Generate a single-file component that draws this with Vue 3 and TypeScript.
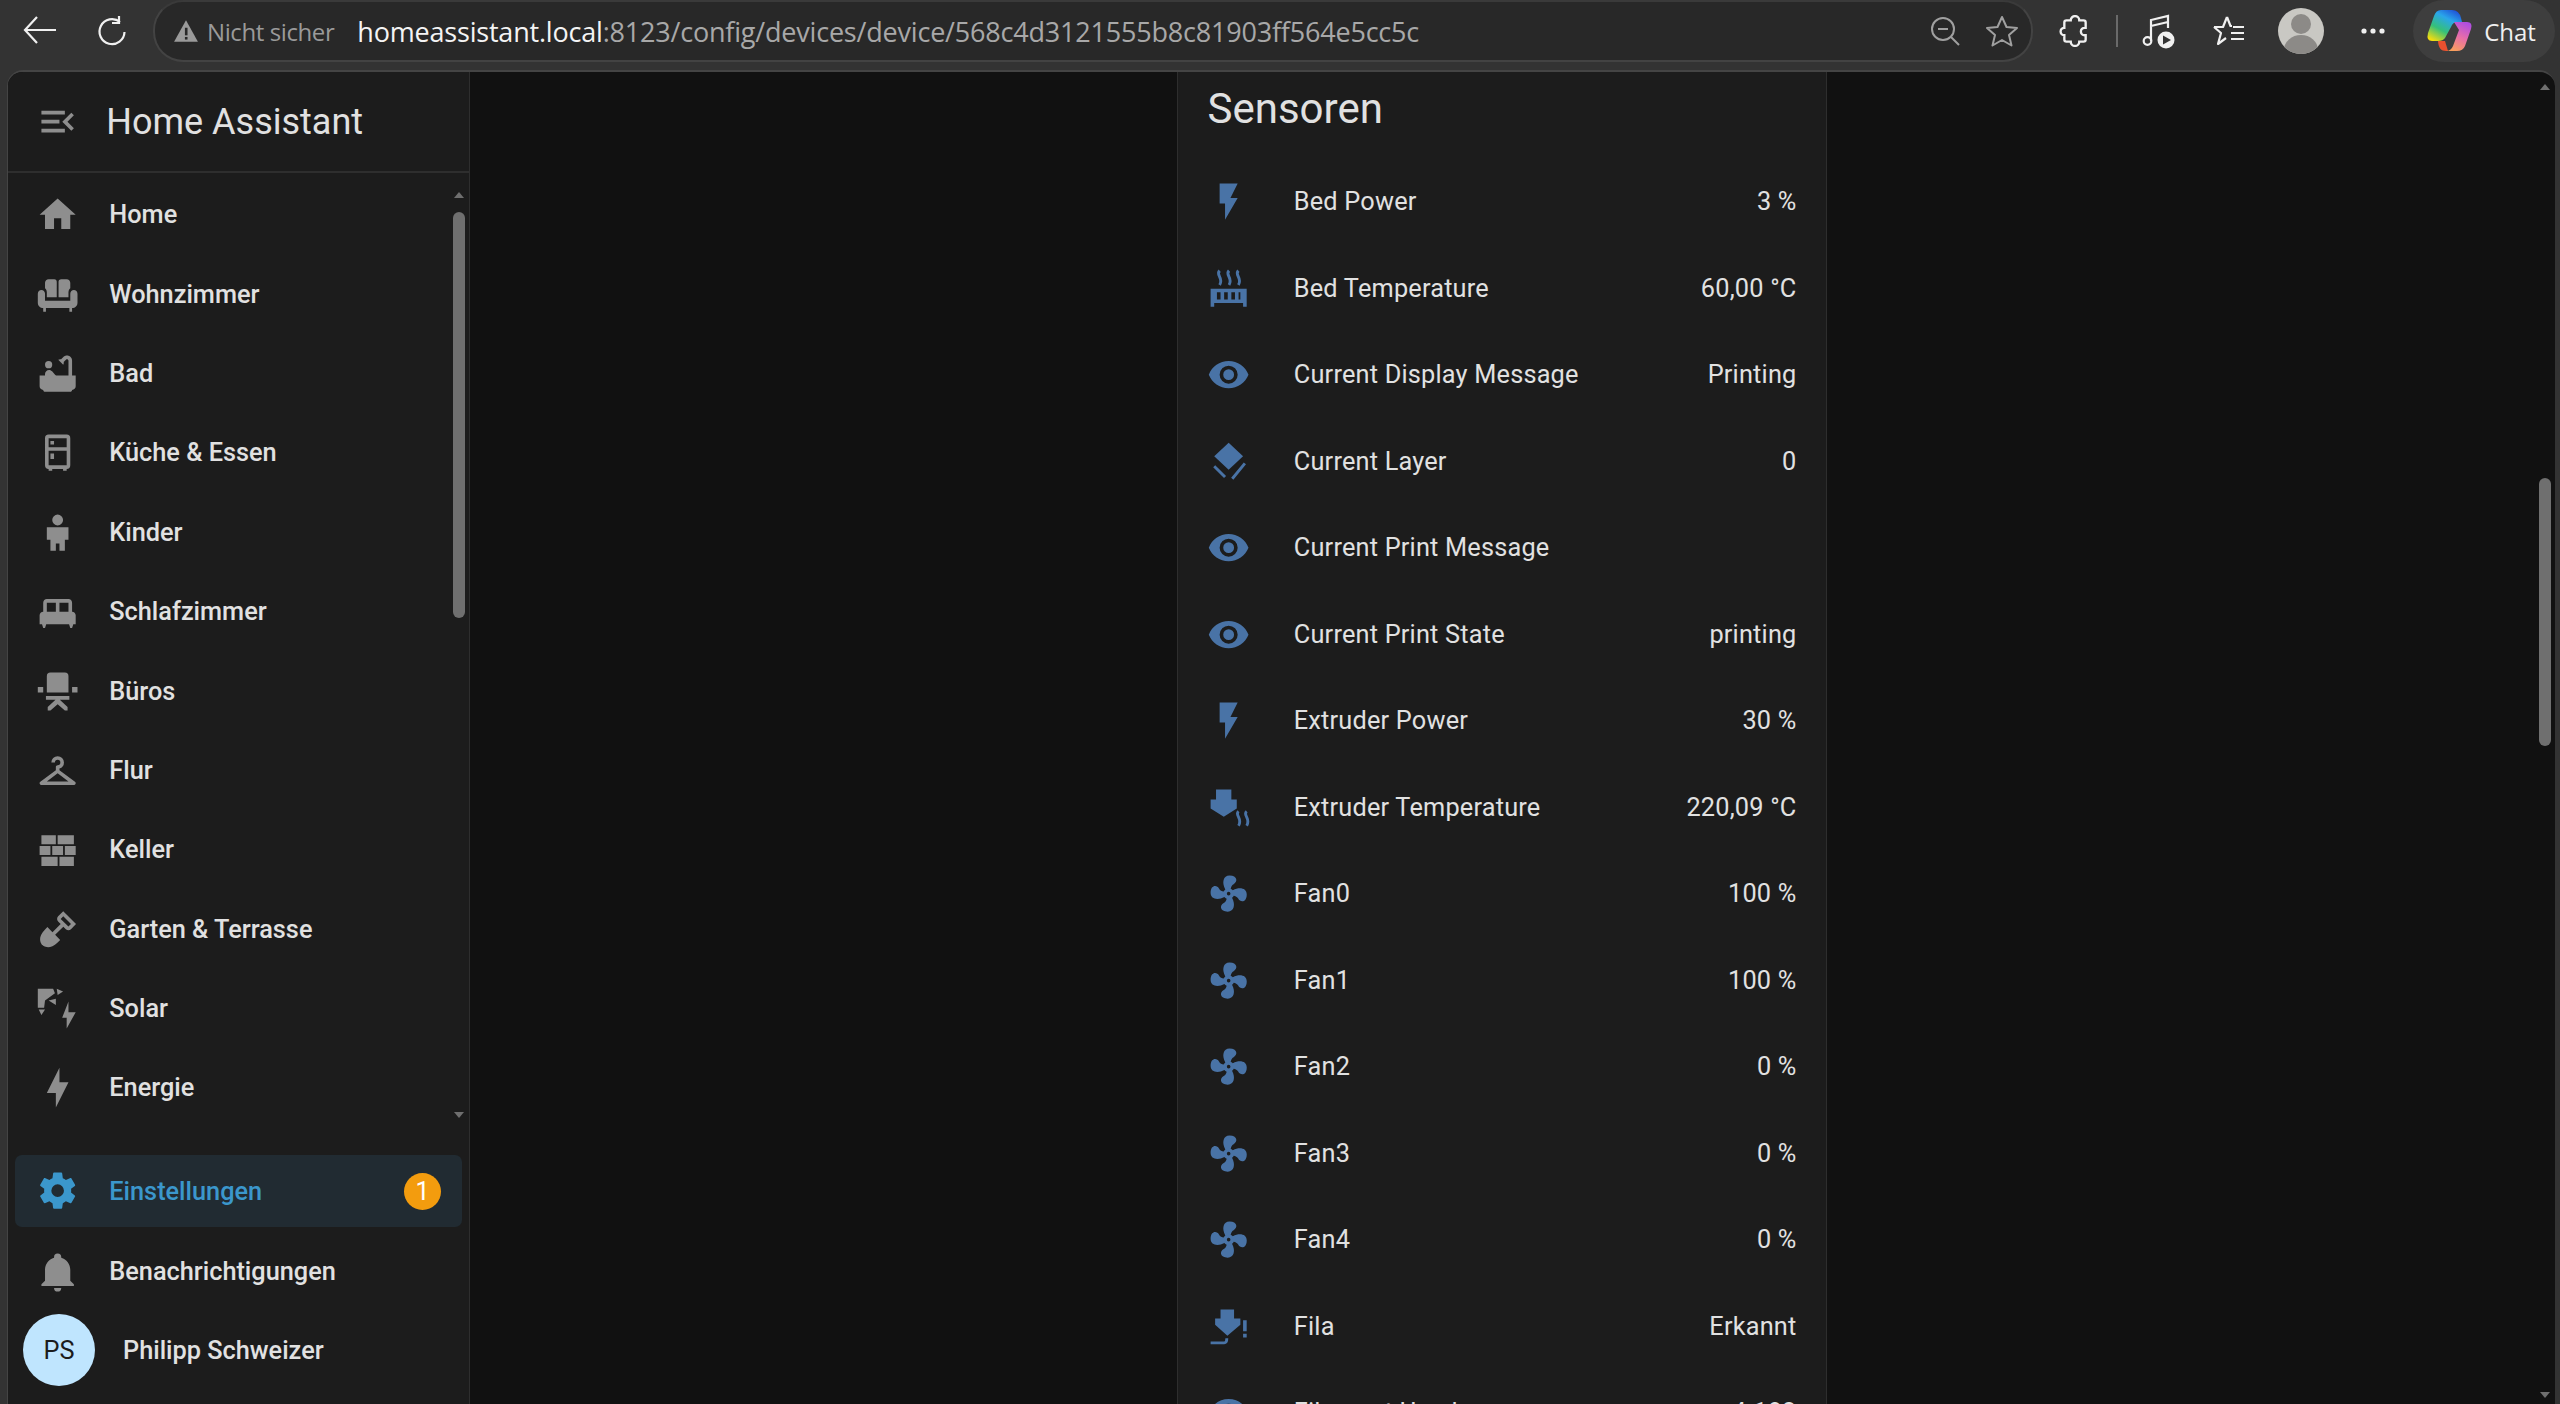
<script setup lang="ts">
interface Icon {
  d: string
  stroke?: string
}

const icons: Record<string, Icon> = {
  home: { d: 'M10,20V14H14V20H19V12H22L12,3L2,12H5V20H10Z' },
  sofa: { d: 'M7 4H10.2C11 4 11.5 4.6 11.5 5.4V14H6V11.2C6 10 5.3 9.2 5 9V6C5 4.9 5.9 4 7 4M14 4H17C18.1 4 19 4.9 19 6V9C18.7 9.2 18 10 18 11.2V14H12.5V5.4C12.5 4.6 13 4 14 4M3 10C4.1 10 5 10.9 5 12V16H19V12C19 10.9 19.9 10 21 10S23 10.9 23 12V17C23 18.7 21.7 20 20 20V22H18.5V20H5.5V22H4V20C2.3 20 1 18.7 1 17V12C1 10.9 1.9 10 3 10Z' },
  bath: { d: 'M7 5A2 2 0 1 1 7 9A2 2 0 0 1 7 5M20 13V4.83C20 3.27 18.73 2 17.17 2C16.42 2 15.7 2.3 15.17 2.83L13.92 4.08C13.76 4.03 13.59 4 13.41 4C13.01 4 12.64 4.12 12.33 4.32L15.09 7.08C15.29 6.77 15.41 6.4 15.41 6C15.41 5.82 15.38 5.66 15.34 5.5L16.59 4.25C16.74 4.09 16.95 4 17.17 4C17.63 4 18 4.37 18 4.83V13H11.15C10.85 12.79 10.58 12.55 10.33 12.28L8.93 10.73C8.74 10.52 8.5 10.35 8.24 10.23C7.93 10.08 7.59 10 7.24 10C6 10.01 5 11 5 12.25V13H2V19C2 20.1 2.9 21 4 21C4 21.55 4.45 22 5 22H19C19.55 22 20 21.55 20 21C21.1 21 22 20.1 22 19V13H20Z' },
  fridge: { d: 'M7 2H17A2 2 0 0 1 19 4V19A2 2 0 0 1 17 21V22H15V21H9V22H7V21A2 2 0 0 1 5 19V4A2 2 0 0 1 7 2M7 4V9H17V4H7M7 11V19H17V11H7M8 5.5H10V7.5H8V5.5M8 12.5H10V15.5H8V12.5Z' },
  child: { d: 'M12,2A3,3 0 0,1 15,5A3,3 0 0,1 12,8A3,3 0 0,1 9,5A3,3 0 0,1 12,2M11,22H8V16H6V9H18V16H16V22H13V18H11V22Z' },
  bed: { d: 'M20,12V7C20,5.9 19.1,5 18,5H6C4.9,5 4,5.9 4,7V12C2.9,12 2,12.9 2,14V19H3.33L4,21H5L5.67,19H18.33L19,21H20L20.67,19H22V14C22,12.9 21.1,12 20,12M11,12H6V7H11V12M18,12H13V7H18V12Z' },
  chair: { d: 'M8 2H16A2 2 0 0 1 18 4V13H6V4A2 2 0 0 1 8 2M1 10H4V13H1V10M20 10H23V13H20V10M5.5 15H18.5V17H13.2L17.5 21V23H16L12 19.6L8 23H6.5V21L10.8 17H5.5V15Z' },
  hanger: { d: 'M12 4A3.5 3.5 0 0 0 8.5 7.5H10.5A1.5 1.5 0 0 1 12 6A1.5 1.5 0 0 1 13.5 7.5A1.5 1.5 0 0 1 12 9C11.45 9 11 9.45 11 10V11.75L2.4 18.2A1 1 0 0 0 3 20H21A1 1 0 0 0 21.6 18.2L13 11.75V10.85A3.5 3.5 0 0 0 15.5 7.5A3.5 3.5 0 0 0 12 4M12 13.5L18 18H6Z' },
  wall: { d: 'M3 16H12V21H3V16M2 10H8V15H2V10M9 10H15V15H9V10M16 10H22V15H16V10M13 16H21V21H13V16M3 4H11V9H3V4M12 4H21V9H12V4Z' },
  shovel: { d: 'M15.1 1.81L12.27 4.64C11.5 5.42 11.5 6.69 12.27 7.47L13.68 8.88L9.13 13.43L6.31 10.6L4.89 12C-.06 17 3.5 20.5 3.5 20.5S7 24 12 19.09L13.41 17.68L10.61 14.88L15.15 10.34L16.55 11.73C17.33 12.5 18.6 12.5 19.38 11.73L22.2 8.9L15.1 1.81M17.97 10.32L13.68 6.03L15.1 4.61L19.39 8.9L17.97 10.32Z' },
  solar: { d: 'M1 1H9.5L10.5 3.5L5 7.5L4.5 11.5H1V1M11.5 1L15 2.5L12 4.5L11.5 1M7 7.5L11 6.5L11 10L7 7.5M1.5 12.5H5L3 15.5L1.5 12.5M18 8V14H22L17 23V17H14.5L18 8Z' },
  bolt: { d: 'M11 15H6L13 1V9H18L11 23V15Z' },
  cog: { d: 'M12,15.5A3.5,3.5 0 0,1 8.5,12A3.5,3.5 0 0,1 12,8.5A3.5,3.5 0 0,1 15.5,12A3.5,3.5 0 0,1 12,15.5M19.43,12.97C19.47,12.65 19.5,12.33 19.5,12C19.5,11.67 19.47,11.34 19.43,11L21.54,9.37C21.73,9.22 21.78,8.95 21.66,8.73L19.66,5.27C19.54,5.05 19.27,4.96 19.05,5.05L16.56,6.05C16.04,5.66 15.5,5.32 14.87,5.07L14.5,2.42C14.46,2.18 14.25,2 14,2H10C9.75,2 9.54,2.18 9.5,2.42L9.13,5.07C8.5,5.32 7.96,5.66 7.44,6.05L4.95,5.05C4.73,4.96 4.46,5.05 4.34,5.27L2.34,8.73C2.21,8.95 2.27,9.22 2.46,9.37L4.57,11C4.53,11.34 4.5,11.67 4.5,12C4.5,12.33 4.53,12.65 4.57,12.97L2.46,14.63C2.27,14.78 2.21,15.05 2.34,15.27L4.34,18.73C4.46,18.95 4.73,19.03 4.95,18.95L7.44,17.94C7.96,18.34 8.5,18.68 9.13,18.93L9.5,21.58C9.54,21.82 9.75,22 10,22H14C14.25,22 14.46,21.82 14.5,21.58L14.87,18.93C15.5,18.67 16.04,18.34 16.56,17.94L19.05,18.95C19.27,19.03 19.54,18.95 19.66,18.73L21.66,15.27C21.78,15.05 21.73,14.78 21.54,14.63L19.43,12.97Z' },
  bell: { d: 'M21,19V20H3V19L5,17V11C5,7.9 7.03,5.17 10,4.29C10,4.19 10,4.1 10,4A2,2 0 0,1 12,2A2,2 0 0,1 14,4C14,4.1 14,4.19 14,4.29C16.97,5.17 19,7.9 19,11V17L21,19M14,21A2,2 0 0,1 12,23A2,2 0 0,1 10,21' },
  menu: { d: 'M21,15.61L19.59,17L14.58,12L19.59,7L21,8.39L17.44,12L21,15.61M3,6H16V8H3V6M3,13V11H13V13H3M3,18V16H16V18H3Z' },
  flash: { d: 'M7,2V13H10V22L17,10H13L17,2H7Z' },
  bedTemp: {
    d: 'M2 12H22V22H20V20H4V22H2V12M5.5 14V18H7.5V14H5.5M9.5 14V18H11.5V14H9.5M13.5 14V18H15.5V14H13.5M17.5 14V18H18.5V14H17.5Z',
    stroke: 'M7 2C4.5 4.5 9.5 6 7 10M12.2 2C9.7 4.5 14.7 6 12.2 10M17.4 2C14.9 4.5 19.9 6 17.4 10',
  },
  eye: { d: 'M12,9A3,3 0 0,0 9,12A3,3 0 0,0 12,15A3,3 0 0,0 15,12A3,3 0 0,0 12,9M12,17A5,5 0 0,1 7,12A5,5 0 0,1 12,7A5,5 0 0,1 17,12A5,5 0 0,1 12,17M12,4.5C7,4.5 2.73,7.61 1,12C2.73,16.39 7,19.5 12,19.5C17,19.5 21.27,16.39 23,12C21.27,7.61 17,4.5 12,4.5Z' },
  layer: {
    d: 'M12 1.5L20 9L12 16.5L4 9Z',
    stroke: 'M4 14.5L10 20.5M14 21.5L21 13',
  },
  nozzleHeat: {
    d: 'M5 2H13.5V7.5H16.5V12.5L9.3 17L2 12.5V7.5H5V2Z',
    stroke: 'M17.5 14C15 16 20 18 17.5 22M22 14C19.5 16 24.5 18 22 22',
  },
  fan: { d: 'M12,11A1,1 0 0,0 11,12A1,1 0 0,0 12,13A1,1 0 0,0 13,12A1,1 0 0,0 12,11M12.5,2C17,2 17.11,5.57 14.75,6.75C13.76,7.24 13.32,8.29 13.13,9.22C13.61,9.42 14.03,9.73 14.35,10.13C18.05,8.13 22.03,8.92 22.03,12.5C22.03,17 18.46,17.1 17.28,14.73C16.78,13.74 15.72,13.3 14.79,13.11C14.59,13.59 14.28,14 13.88,14.34C15.87,18.03 15.08,22 11.5,22C7,22 6.91,18.42 9.27,17.24C10.25,16.75 10.69,15.71 10.89,14.79C10.4,14.59 9.97,14.27 9.65,13.87C5.96,15.85 2,15.07 2,11.5C2,7 5.56,6.89 6.74,9.26C7.24,10.25 8.29,10.68 9.22,10.87C9.41,10.39 9.73,9.97 10.14,9.65C8.15,5.96 8.94,2 12.5,2Z' },
  nozzleAlert: {
    d: 'M7.5 2.5H15V7.5H18.5V11L11.3 17L4.5 11V7.5H7.5V2.5M20 8.5H22V14.5H20V8.5M20 16H22V18H20V16Z',
    stroke: 'M2 21H9.5C10.6 21 11 20.2 11 18.5',
  },
}

const navItems = [
  { label: 'Home', icon: 'home' },
  { label: 'Wohnzimmer', icon: 'sofa' },
  { label: 'Bad', icon: 'bath' },
  { label: 'Küche & Essen', icon: 'fridge' },
  { label: 'Kinder', icon: 'child' },
  { label: 'Schlafzimmer', icon: 'bed' },
  { label: 'Büros', icon: 'chair' },
  { label: 'Flur', icon: 'hanger' },
  { label: 'Keller', icon: 'wall' },
  { label: 'Garten & Terrasse', icon: 'shovel' },
  { label: 'Solar', icon: 'solar' },
  { label: 'Energie', icon: 'bolt' },
]

const sensors = [
  { label: 'Bed Power', value: '3 %', icon: 'flash' },
  { label: 'Bed Temperature', value: '60,00 °C', icon: 'bedTemp' },
  { label: 'Current Display Message', value: 'Printing', icon: 'eye' },
  { label: 'Current Layer', value: '0', icon: 'layer' },
  { label: 'Current Print Message', value: '', icon: 'eye' },
  { label: 'Current Print State', value: 'printing', icon: 'eye' },
  { label: 'Extruder Power', value: '30 %', icon: 'flash' },
  { label: 'Extruder Temperature', value: '220,09 °C', icon: 'nozzleHeat' },
  { label: 'Fan0', value: '100 %', icon: 'fan' },
  { label: 'Fan1', value: '100 %', icon: 'fan' },
  { label: 'Fan2', value: '0 %', icon: 'fan' },
  { label: 'Fan3', value: '0 %', icon: 'fan' },
  { label: 'Fan4', value: '0 %', icon: 'fan' },
  { label: 'Fila', value: 'Erkannt', icon: 'nozzleAlert' },
  { label: 'Filament Used', value: '4.182', icon: 'eye' },
]
</script>

<template>
  <div class="browser">
    <header class="toolbar">
      <svg class="tb-icon back" width="36" height="30" viewBox="0 0 36 30" fill="none" stroke="#f0f0f0" stroke-width="2.2">
        <path d="M34 15H4M15 2L3 15L15 28" />
      </svg>
      <svg class="tb-icon reload" width="32" height="32" viewBox="0 0 32 32" fill="none" stroke="#f0f0f0" stroke-width="2.2">
        <path d="M24 7A12.5 12.5 0 1 0 28.5 17M23 1V8H16" />
      </svg>
      <div class="address">
        <svg width="26" height="26" viewBox="0 0 24 24" fill="#9a9a9a">
          <path d="M12 2L23 22H1Z" />
          <rect x="11" y="9" width="2.4" height="7" fill="#282828" />
          <rect x="11" y="17.5" width="2.4" height="2.4" fill="#282828" />
        </svg>
        <span class="not-secure">Nicht sicher</span>
        <span class="url"><b>homeassistant.local</b>:8123/config/devices/device/568c4d3121555b8c81903ff564e5cc5c</span>
        <svg class="addr-right zoom" width="32" height="32" viewBox="0 0 32 32" fill="none" stroke="#a0a0a0" stroke-width="2">
          <circle cx="14" cy="14" r="11" />
          <path d="M9 14H19M22 22L30 30" />
        </svg>
        <svg class="addr-right star" width="34" height="32" viewBox="0 0 34 32" fill="none" stroke="#a0a0a0" stroke-width="2" stroke-linejoin="round">
          <path d="M17 2L21.5 12L32 13L24 20L26.5 30.5L17 25L7.5 30.5L10 20L2 13L12.5 12Z" />
        </svg>
      </div>
      <div class="tb-right">
        <svg width="32" height="32" viewBox="0 0 30 30" fill="none" stroke="#f0f0f0" stroke-width="2.2">
          <path d="M11 5a4 4 0 0 1 8 0h4a2 2 0 0 1 2 2v5h-1a3.5 3.5 0 0 0 0 7h1v4a2 2 0 0 1-2 2h-4a4 4 0 0 1-8 0h-4a2 2 0 0 1-2-2v-4a3.5 3.5 0 0 1 0-7v-5a2 2 0 0 1 2-2z" />
        </svg>
        <span class="tb-sep"></span>
        <svg width="34" height="36" viewBox="0 0 34 36" fill="none" stroke="#f0f0f0" stroke-width="2.2">
          <path d="M9 28V7L26 3V15M9 13L26 9" />
          <circle cx="5.5" cy="28" r="3.8" />
          <circle cx="24" cy="27" r="8.5" fill="#f0f0f0" stroke="none" />
          <path d="M21 22.5L29 27L21 31.5Z" fill="#333" stroke="none" />
        </svg>
        <svg width="34" height="32" viewBox="0 0 34 32" fill="none" stroke="#f0f0f0" stroke-width="2.2" stroke-linejoin="round">
          <path d="M15 2L18.5 11H20M2 12H11L15 2M2 12L9 18L6 29L14 23" />
          <path d="M21 12H32M19 18H32M19 24H32" />
        </svg>
        <svg width="46" height="46" viewBox="0 0 46 46">
          <defs>
            <clipPath id="avatar-clip"><circle cx="23" cy="23" r="23" /></clipPath>
          </defs>
          <circle cx="23" cy="23" r="23" fill="#c9c8c3" />
          <g clip-path="url(#avatar-clip)" fill="#8c8a87">
            <circle cx="23" cy="16" r="10" />
            <ellipse cx="23" cy="42" rx="17" ry="15" />
          </g>
        </svg>
        <svg width="26" height="8" viewBox="0 0 26 8" fill="#f0f0f0">
          <circle cx="4" cy="4" r="2.6" />
          <circle cx="13" cy="4" r="2.6" />
          <circle cx="22" cy="4" r="2.6" />
        </svg>
      </div>
      <div class="chat">
        <svg width="48" height="46" viewBox="5 8 48 46">
          <defs>
            <linearGradient id="cp-left" x1="0.8" y1="0" x2="0.2" y2="1">
              <stop offset="0" stop-color="#1f50d8" />
              <stop offset="0.3" stop-color="#2aa6ea" />
              <stop offset="0.65" stop-color="#35c07a" />
              <stop offset="1" stop-color="#f2dc10" />
            </linearGradient>
            <linearGradient id="cp-right" x1="0.7" y1="0" x2="0.3" y2="1">
              <stop offset="0" stop-color="#b04ee0" />
              <stop offset="0.5" stop-color="#e86ea8" />
              <stop offset="1" stop-color="#f9a05a" />
            </linearGradient>
          </defs>
          <path d="M17 41H24L27 51H25C20 51 17.5 48 17 41Z" fill="#e8502f" />
          <path d="M20 10H31Q38 10 40 18L41 22H36Q32 22 30 27L24 38Q22 41 17 41H11Q5 41 7 33L13 16Q15 10 20 10Z" fill="url(#cp-left)" />
          <path d="M33 22H46Q52 22 50 29L44 46Q42 51 36 51H25Q30 51 32 46L38 30Z" fill="url(#cp-right)" />
        </svg>
        <span>Chat</span>
      </div>
    </header>

    <div class="window">
      <aside class="sidebar">
        <div class="side-head">
          <svg class="icon" viewBox="0 0 24 24"><path :d="icons.menu.d" /></svg>
          <span class="side-title">Home Assistant</span>
        </div>
        <nav class="nav">
          <a v-for="item in navItems" :key="item.label" class="nav-item">
            <svg class="icon" viewBox="0 0 24 24"><path :d="icons[item.icon].d" fill-rule="evenodd" /></svg>
            <span>{{ item.label }}</span>
          </a>
          <div class="side-scroll">
            <span class="arrow up"></span>
            <span class="thumb"></span>
            <span class="arrow down"></span>
          </div>
        </nav>
        <div class="side-bottom">
          <a class="nav-item active">
            <svg class="icon" viewBox="0 0 24 24"><path :d="icons.cog.d" /></svg>
            <span>Einstellungen</span>
            <span class="badge">1</span>
          </a>
          <a class="nav-item">
            <svg class="icon" viewBox="0 0 24 24"><path :d="icons.bell.d" /></svg>
            <span>Benachrichtigungen</span>
          </a>
          <div class="user">
            <span class="user-avatar">PS</span>
            <span>Philipp Schweizer</span>
          </div>
        </div>
      </aside>

      <main class="main">
        <section class="card">
          <h2>Sensoren</h2>
          <div v-for="row in sensors" :key="row.label" class="row">
            <svg class="row-icon" viewBox="0 0 24 24">
              <path :d="icons[row.icon].d" fill-rule="evenodd" />
              <path v-if="icons[row.icon].stroke" :d="icons[row.icon].stroke" class="row-stroke" />
            </svg>
            <span class="row-label">{{ row.label }}</span>
            <span class="row-value">{{ row.value }}</span>
          </div>
        </section>
        <div class="main-scroll">
          <span class="arrow up"></span>
          <span class="thumb"></span>
          <span class="arrow down"></span>
        </div>
      </main>
    </div>
  </div>
</template>

<style>
html,
body {
  margin: 0;
  overflow: hidden;
  background: #333;
}
</style>

<style scoped>
.browser {
  display: flex;
  flex-direction: column;
  height: 1404px;
  background: #333;
  font-family: Roboto, "Noto Sans", sans-serif;
  color: #e1e1e1;
}

.toolbar {
  display: flex;
  align-items: flex-start;
  height: 70px;
  flex-shrink: 0;
  background: #333;
}

.tb-icon {
  flex-shrink: 0;
  margin-top: 15px;
}

.back {
  margin-left: 22px;
}

.reload {
  margin-left: 38px;
}

.address {
  display: flex;
  align-items: center;
  box-sizing: border-box;
  width: 1882px;
  height: 62px;
  margin-left: 25px;
  padding: 0 12px 0 18px;
  background: #282828;
  border: 2px solid #434343;
  border-top-color: #3a3a3a;
  border-radius: 30px;
  font-family: "Open Sans", "Noto Sans", sans-serif;
}

.not-secure {
  margin-left: 8px;
  font-size: 24px;
  letter-spacing: -0.4px;
  color: #9a9a9a;
}

.url {
  margin-left: 23px;
  font-size: 27px;
  letter-spacing: -0.2px;
  color: #a8a8a8;
  white-space: nowrap;
  flex: 1;
}

.url b {
  font-weight: 400;
  color: #f4f4f4;
}

.addr-right {
  flex-shrink: 0;
}

.star {
  margin-left: 24px;
}

.tb-right {
  display: flex;
  align-items: center;
  height: 62px;
  margin-left: 26px;
  width: 354px;
  flex-shrink: 0;
}

.tb-sep {
  width: 2px;
  height: 32px;
  margin: 0 24px 0 25px;
  background: #6a6a6a;
}

.tb-right > svg:nth-child(4) {
  margin-left: 36px;
}

.tb-right > svg:nth-child(5) {
  margin-left: 32px;
}

.tb-right > svg:nth-child(6) {
  margin-left: 36px;
}

.chat {
  display: flex;
  align-items: center;
  box-sizing: border-box;
  width: 142px;
  height: 62px;
  padding-left: 13px;
  gap: 10px;
  margin-left: auto;
  margin-right: 5px;
  background: #3e3e3e;
  border-radius: 31px;
  font-family: "Open Sans", "Noto Sans", sans-serif;
  font-size: 24px;
  color: #f0f0f0;
}

.window {
  display: flex;
  flex: 1;
  min-height: 0;
  margin: 0 5px 0 7px;
  border-top: 2px solid #444;
  border-left: 1px solid #444;
  border-radius: 16px 16px 0 0;
  overflow: hidden;
  background: #111;
}

.sidebar {
  display: flex;
  flex-direction: column;
  box-sizing: border-box;
  width: 462px;
  flex-shrink: 0;
  background: #1c1c1c;
  border-right: 1px solid #2e2e2e;
}

.side-head {
  display: flex;
  align-items: center;
  box-sizing: border-box;
  height: 101px;
  padding-left: 28px;
  border-bottom: 2px solid #2e2e2e;
  flex-shrink: 0;
}

.side-title {
  margin-left: 27px;
  font-size: 36px;
  color: #e1e1e1;
}

.icon {
  width: 43.3px;
  height: 43.3px;
  flex-shrink: 0;
  fill: #8e8e8e;
}

.nav {
  position: relative;
  height: 965px;
  padding-top: 2px;
  box-sizing: border-box;
  flex-shrink: 0;
  overflow: hidden;
}

.nav-item {
  display: flex;
  align-items: center;
  box-sizing: border-box;
  height: 79.4px;
  padding-left: 28px;
  font-size: 25.3px;
  font-weight: 500;
  color: #e1e1e1;
}

.nav-item > span:first-of-type {
  margin-left: 30px;
}

.side-bottom {
  padding-top: 17px;
}

.nav-item.active {
  height: 72px;
  margin: 0 7px 5px 7px;
  padding-left: 21px;
  background: #212b32;
  border-radius: 7px;
  color: #3b97cc;
}

.nav-item.active .icon {
  fill: #3b97cc;
}

.badge {
  display: flex;
  align-items: center;
  justify-content: center;
  width: 37px;
  height: 37px;
  margin-left: auto;
  margin-right: 21px;
  background: #f39c0e;
  border-radius: 50%;
  font-size: 25px;
  font-weight: 400;
  color: #fff;
}

.user {
  display: flex;
  align-items: center;
  height: 72px;
  margin-top: 3px;
  padding-left: 15px;
  font-size: 25.3px;
  font-weight: 500;
}

.user-avatar {
  display: flex;
  align-items: center;
  justify-content: center;
  width: 72px;
  height: 72px;
  margin-right: 28px;
  background: #bfe5fe;
  border-radius: 50%;
  font-weight: 400;
  color: #1c1c1c;
}

.side-scroll {
  position: absolute;
  top: 19px;
  right: 4px;
  bottom: 20px;
  display: flex;
  flex-direction: column;
  align-items: center;
  width: 13px;
}

.side-scroll .thumb {
  height: 406px;
  margin-top: 14px;
}

.side-scroll .down {
  margin-top: auto;
}

.thumb {
  display: block;
  width: 12px;
  background: #6f6f6f;
  border-radius: 6px;
}

.arrow {
  display: block;
  width: 0;
  height: 0;
  border-left: 5px solid transparent;
  border-right: 5px solid transparent;
}

.arrow.up {
  border-bottom: 6px solid #6f6f6f;
}

.arrow.down {
  border-top: 6px solid #6f6f6f;
}

.main {
  position: relative;
  flex: 1;
  min-width: 0;
  overflow: hidden;
  display: flex;
  justify-content: center;
  padding-right: 22px;
}

.card {
  box-sizing: border-box;
  width: 650px;
  height: 1500px;
  flex-shrink: 0;
  background: #1c1c1c;
  border-left: 1px solid #2e2e2e;
  border-right: 1px solid #2e2e2e;
  padding: 0 29px 0 30px;
}

.card h2 {
  display: flex;
  align-items: center;
  height: 72px;
  margin: 0 0 14.5px;
  font-size: 42px;
  font-weight: 400;
  color: #e1e1e1;
}

.row {
  display: flex;
  align-items: center;
  height: 86.5px;
  font-size: 25.3px;
  letter-spacing: 0.2px;
  color: #e1e1e1;
}

.row-icon {
  width: 43.3px;
  height: 43.3px;
  flex-shrink: 0;
  margin-left: -1px;
  fill: #4973a6;
}

.row-stroke {
  fill: none;
  stroke: #4973a6;
  stroke-width: 1.6;
}

.row-label {
  margin-left: 44px;
  flex: 1;
}

.row-value {
  white-space: nowrap;
}

.main-scroll {
  position: absolute;
  top: 12px;
  right: 4px;
  bottom: 6px;
  width: 13px;
  display: flex;
  flex-direction: column;
  align-items: center;
}

.main-scroll .thumb {
  height: 268px;
  margin-top: 388px;
}

.main-scroll .down {
  margin-top: auto;
}
</style>
